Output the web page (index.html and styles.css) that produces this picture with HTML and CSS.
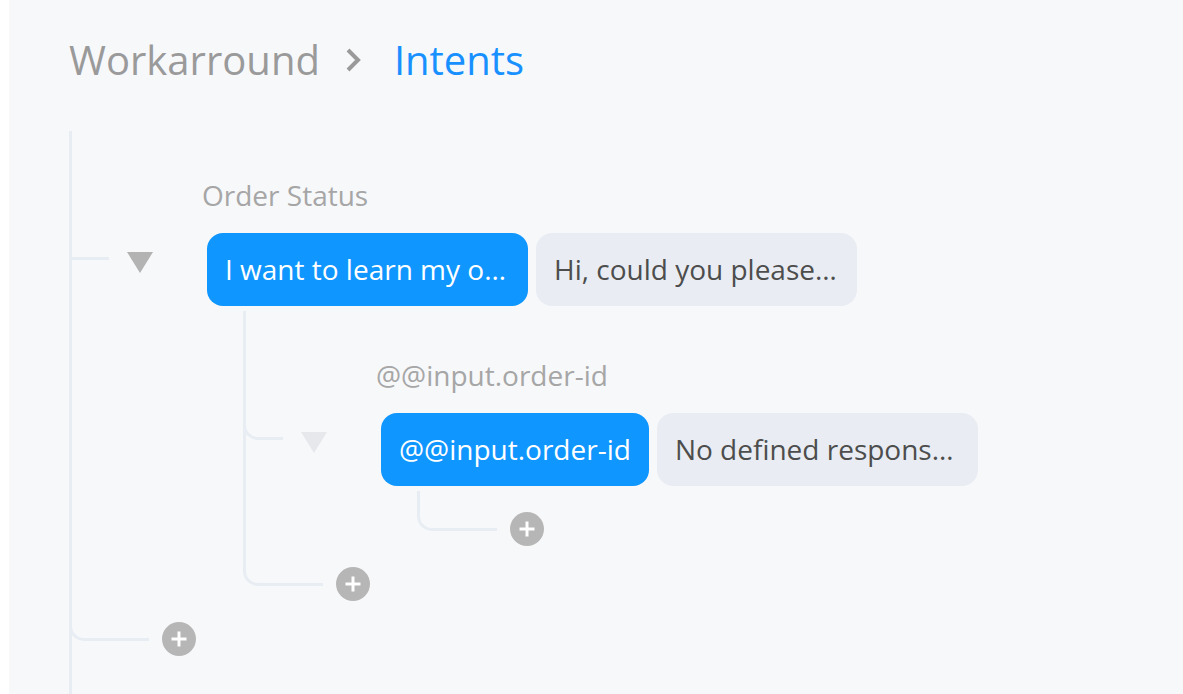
FILE: index.html
```html
<!DOCTYPE html>
<html lang="en">
<head>
    <meta charset="UTF-8">
    <meta name="viewport" content="width=device-width, initial-scale=1.0">
    <title>Intents</title>
    <link rel="stylesheet" href="styles.css">
</head>
<body>

<div class="app">
    <nav class="breadcrumb">
        <span class="crumb">Workarround</span>
        <svg class="crumb-sep" width="16" height="26" viewBox="0 0 16 26">
            <polyline points="3,3 13,13 3,23" fill="none" stroke="#9a9a9a" stroke-width="4"/>
        </svg>
        <span class="crumb crumb-current">Intents</span>
    </nav>

    <div class="tree">
        <div class="node">
            <div class="node-label">Order Status</div>
            <span class="branch-line"></span>
            <span class="toggle"></span>
            <div class="bubbles">
                <div class="bubble bubble-intent bubble-wide">I want to learn my o…</div>
                <div class="bubble bubble-reply bubble-wide">Hi, could you please…</div>
            </div>

            <div class="children">
                <div class="node node-sub">
                    <div class="node-label">@@input.order-id</div>
                    <span class="elbow elbow-node"></span>
                    <span class="toggle toggle-off"></span>
                    <div class="bubbles">
                        <div class="bubble bubble-intent">@@input.order-id</div>
                        <div class="bubble bubble-reply bubble-wide">No defined respons…</div>
                    </div>

                    <div class="children">
                        <div class="add-row">
                            <span class="elbow"></span>
                            <button class="add-btn" title="Add">
                                <svg width="34" height="34" viewBox="0 0 34 34">
                                    <line x1="17" y1="9.5" x2="17" y2="24.5" stroke="#fff" stroke-width="3"/>
                                    <line x1="9.5" y1="17" x2="24.5" y2="17" stroke="#fff" stroke-width="3"/>
                                </svg>
                            </button>
                        </div>
                    </div>
                </div>

                <div class="add-row">
                    <span class="elbow"></span>
                    <button class="add-btn" title="Add">
                        <svg width="34" height="34" viewBox="0 0 34 34">
                            <line x1="17" y1="9.5" x2="17" y2="24.5" stroke="#fff" stroke-width="3"/>
                            <line x1="9.5" y1="17" x2="24.5" y2="17" stroke="#fff" stroke-width="3"/>
                        </svg>
                    </button>
                </div>
            </div>
        </div>

        <div class="add-row add-root">
            <span class="elbow"></span>
            <button class="add-btn" title="Add">
                <svg width="34" height="34" viewBox="0 0 34 34">
                    <line x1="17" y1="9.5" x2="17" y2="24.5" stroke="#fff" stroke-width="3"/>
                    <line x1="9.5" y1="17" x2="24.5" y2="17" stroke="#fff" stroke-width="3"/>
                </svg>
            </button>
        </div>
    </div>
</div>

</body>
</html>
```

FILE: styles.css
```css
html, body {
    margin: 0;
    height: 100%;
    overflow: hidden;
}

body {
    background-color: #ffffff;
    font-family: "Open Sans", "Noto Sans", sans-serif;
}

.app {
    margin-left: 9px;
    min-height: 100vh;
    background-color: #f7f8fa;
    display: flex;
    flex-direction: column;
}

/* breadcrumb */
.breadcrumb {
    display: flex;
    align-items: center;
    padding: 36px 0 0 60px;
    height: 48px;
    font-size: 40px;
    line-height: 48px;
}

.crumb {
    color: #9a9a9a;
}

.crumb-sep {
    margin: 0 33px 0 25px;
}

.crumb-current {
    color: #1890ff;
}

/* tree */
.tree {
    flex: 1;
    margin: 47px 0 0 60px;
    border-left: 3px solid #e8edf3;
}

.node {
    display: grid;
    grid-template-columns: 55px 75px auto;
    align-items: start;
    justify-content: start;
    padding-top: 46px;
}

.node-sub {
    border-left: 3px solid #e8edf3;
}

.node-label {
    grid-column: 3;
    grid-row: 1;
    font-size: 28px;
    line-height: 36px;
    color: #a6a6a6;
}

.branch-line {
    grid-column: 1;
    grid-row: 2;
    width: 37px;
    height: 3px;
    margin-top: 44px;
    background-color: #e8edf3;
}

.toggle {
    grid-column: 2;
    grid-row: 2;
    width: 0;
    height: 0;
    margin-top: 39px;
    border-left: 13px solid transparent;
    border-right: 13px solid transparent;
    border-top: 21px solid #b3b3b3;
}

.toggle-off {
    border-top-color: #e6e8eb;
}

.bubbles {
    grid-column: 3;
    grid-row: 2;
    display: flex;
    gap: 8px;
    margin: 20px 0 0 5px;
}

.bubble {
    box-sizing: border-box;
    height: 73px;
    padding: 0 18px;
    border-radius: 16px;
    font-size: 28px;
    line-height: 73px;
    white-space: nowrap;
}

.bubble-wide {
    width: 321px;
}

.bubble-intent {
    background-color: #0f96ff;
    color: #ffffff;
}

.bubble-reply {
    background-color: #e9edf3;
    color: #4d4d4d;
}

.children {
    grid-column: 3;
    grid-row: 3;
    margin: 5px 0 0 41px;
}

/* connectors */
.elbow {
    box-sizing: border-box;
    width: 80px;
    height: 40px;
    border-left: 3px solid #e8edf3;
    border-bottom: 3px solid #e8edf3;
    border-bottom-left-radius: 15px;
}

.elbow-node {
    grid-column: 1;
    grid-row: 2;
    width: 40px;
    height: 27px;
    margin: 20px 0 0 -3px;
}

.add-row {
    display: flex;
    align-items: flex-start;
}

.add-root .elbow {
    margin-left: -3px;
}

.add-btn {
    width: 34px;
    height: 34px;
    margin: 21px 0 0 13px;
    padding: 0;
    border: none;
    border-radius: 50%;
    background-color: #b6b6b6;
    cursor: pointer;
}

.add-btn svg {
    display: block;
}
```
